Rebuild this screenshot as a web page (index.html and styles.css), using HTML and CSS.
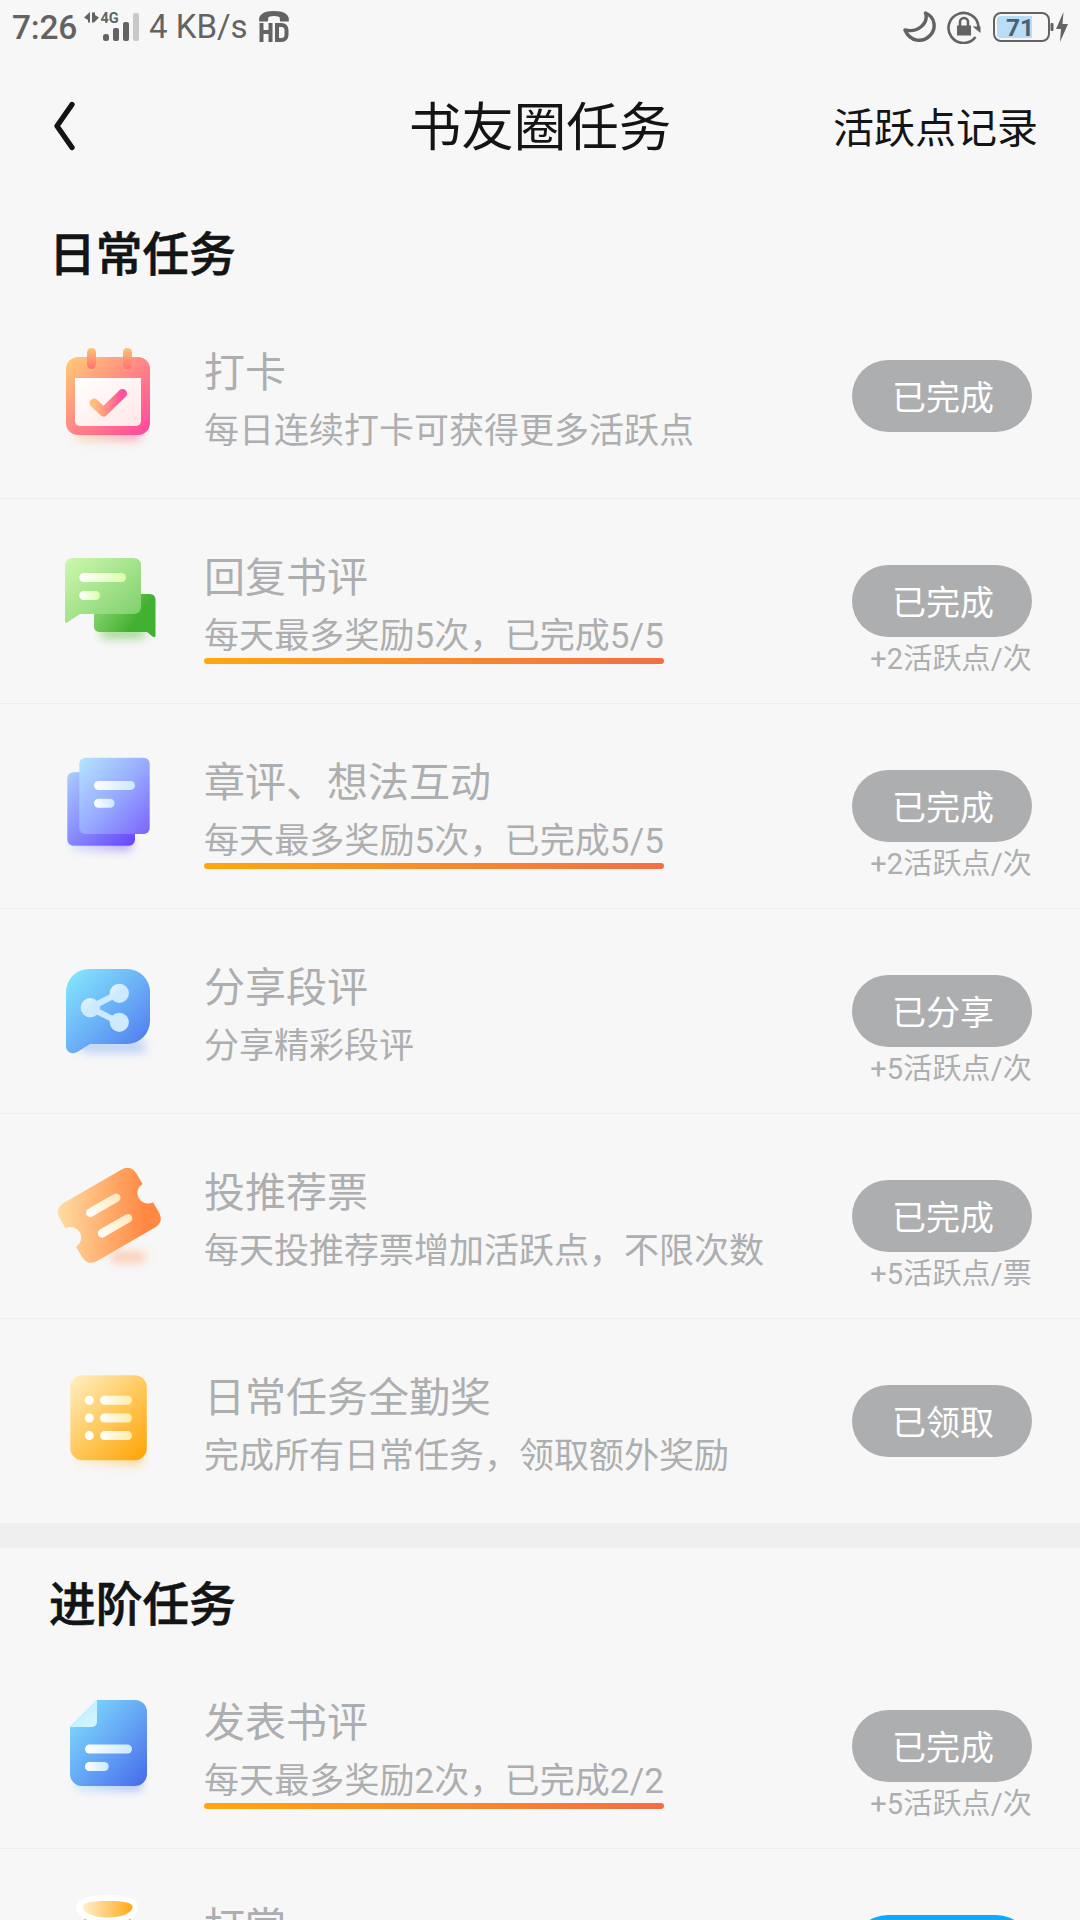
FILE: index.html
```html
<!DOCTYPE html>
<html lang="zh-CN">
<head>
<meta charset="utf-8">
<title>书友圈任务</title>
<link rel="stylesheet" href="styles.css">
</head>
<body>
<div class="screen">
  <div class="status">
    <span class="time">7:26</span>
    <svg class="signal" width="58" height="32" viewBox="0 0 58 32">
      <path d="M6 1v10.500H4V9L0 6.500zM8 1.500h3v2.500l4 2.500-5 5H8z" fill="#636363"/>
      <text x="16.500" y="12.200" class="net">4G</text>
      <rect x="19" y="23" width="6" height="7" rx="2.500" fill="#636363"/>
      <rect x="29" y="17" width="6" height="13" rx="2" fill="#636363"/>
      <rect x="39" y="11" width="6" height="19" rx="2" fill="#636363"/>
      <rect x="49" y="2" width="6" height="28" rx="2" fill="#c9c9c9"/>
    </svg>
    <span class="speed">4 KB/s</span>
    <svg class="hd" width="32" height="32" viewBox="0 0 32 32" fill="none" stroke="#636363">
      <path d="M1.300 10.500C0 5 4 0 16 0s16 5 14.700 10.500h-8.500L21.500 6C18 4.800 14 4.800 10.500 6l-.7 4.500z" fill="#636363" stroke="none"/>
      <path d="M3.500 12v19M12.500 12v19M3.500 21h9M19 14v15h4.500c3 0 5-2 5-5v-5c0-3-2-5-5-5z" stroke-width="4"/>
    </svg>
    <span class="spacer"></span>
    <svg class="moon" width="34" height="34" viewBox="0 0 34 34"><path d="M22.500 3c10 4 11 16 4.500 22.500-7 7.500-20 6.500-25-5.500C14 23 26 14 22.500 3z" fill="none" stroke="#636363" stroke-width="3.400" stroke-linejoin="round"/></svg>
    <svg class="lock" width="34" height="34" viewBox="0 0 34 34">
      <path d="M28.500 27A15 15 0 1 1 31.500 17" fill="none" stroke="#636363" stroke-width="2.600"/>
      <path d="M25.500 16.500h8V23z" fill="#636363"/>
      <rect x="10" y="15.500" width="14" height="10" fill="#636363"/>
      <path d="M13 16v-4a4 4 0 0 1 8 0v4" fill="none" stroke="#636363" stroke-width="2.600"/>
    </svg>
    <svg class="battery" width="76" height="32" viewBox="0 0 76 32">
      <rect x="1" y="2" width="55" height="28" rx="7" fill="none" stroke="#636363" stroke-width="2"/>
      <path d="M8 5h31v22H8a4 4 0 0 1-4-4V9a4 4 0 0 1 4-4z" fill="#b9dcf7"/>
      <text x="27" y="24.700" class="charge">71</text>
      <rect x="57.500" y="12" width="3" height="8" rx="1" fill="#636363"/>
      <path d="M70.500 1L63 18h5l-1 13 8-18h-5.500z" fill="#636363"/>
    </svg>
  </div>

  <header class="header">
    <svg class="back" width="24" height="50" viewBox="0 0 24 50"><path d="M20 3.500L5 25l15 21.500" fill="none" stroke="#121416" stroke-width="5.300" stroke-linecap="round" stroke-linejoin="round"/></svg>
    <h1 class="title">书友圈任务</h1>
    <a class="record">活跃点记录</a>
  </header>

  <section>
    <h2 class="heading">日常任务</h2>

    <div class="row">
      <svg class="icon" viewBox="0 0 120 120">
        <defs>
          <filter id="blur" x="-50%" y="-100%" width="200%" height="300%"><feGaussianBlur stdDeviation="5"/></filter>
          <linearGradient id="c1" x1="0" y1="0" x2="1" y2="1"><stop offset="0" stop-color="#ffcd74"/><stop offset=".5" stop-color="#ff8785"/><stop offset="1" stop-color="#ff459f"/></linearGradient>
          <linearGradient id="c2" x1="0" y1="0" x2="0" y2="1"><stop offset="0" stop-color="#ffc472"/><stop offset="1" stop-color="#ff7176"/></linearGradient>
          <linearGradient id="c3" x1="0" y1="0" x2="1" y2="0"><stop offset="0" stop-color="#ffbf78"/><stop offset="1" stop-color="#ff4f9d"/></linearGradient>
          <linearGradient id="c4" x1="0" y1="0" x2="1" y2="1"><stop offset="0" stop-color="#fff"/><stop offset="1" stop-color="#ffe7e7"/></linearGradient>
          <linearGradient id="c5"><stop offset="0" stop-color="#ffcf7e"/><stop offset="1" stop-color="#ff5a86"/></linearGradient>
        </defs>
        <rect x="27" y="93" width="66" height="14" rx="6" fill="url(#c5)" opacity=".5" filter="url(#blur)"/>
        <rect x="18" y="23" width="84" height="78" rx="12" fill="url(#c1)"/>
        <path d="M27 44h66v43a5 5 0 0 1-5 5H32a5 5 0 0 1-5-5z" fill="url(#c4)"/>
        <rect x="39" y="14" width="9" height="21" rx="4.500" fill="url(#c2)"/>
        <rect x="75" y="14" width="9" height="21" rx="4.500" fill="url(#c2)"/>
        <path d="M46 69l9.500 9L74.500 59.500" fill="none" stroke="url(#c3)" stroke-width="9" stroke-linecap="round" stroke-linejoin="round"/>
      </svg>
      <div class="info"><h3 class="name">打卡</h3><p class="desc">每日连续打卡可获得更多活跃点</p></div>
      <div class="action"><span class="btn">已完成</span></div>
    </div>

    <div class="row">
      <svg class="icon" viewBox="0 0 120 120">
        <defs>
          <linearGradient id="g1" x1="0" y1="0" x2="1" y2="1"><stop offset="0" stop-color="#cff8ae"/><stop offset="1" stop-color="#79cd69"/></linearGradient>
          <linearGradient id="g2" x1="0" y1="0" x2="1" y2=".5"><stop offset="0" stop-color="#97dc7d"/><stop offset=".8" stop-color="#42b030"/></linearGradient>
          <linearGradient id="g3"><stop offset="0" stop-color="#fff"/><stop offset="1" stop-color="#dcffad"/></linearGradient>
        </defs>
        <rect x="52" y="88" width="46" height="12" rx="6" fill="#75c85f" opacity=".6" filter="url(#blur)"/>
        <path d="M52 55h49.500q6 0 6 6v35.500q0 3-3 1L99 93H52q-6 0-6-6V61q0-6 6-6z" fill="url(#g2)"/>
        <path d="M25 19h60q8 0 8 8v40q0 8-8 8H32L19 83.500q-2 1-2-1V27q0-8 8-8z" fill="url(#g1)"/>
        <rect x="31.300" y="34" width="46.700" height="9" rx="4.500" fill="url(#g3)"/>
        <rect x="31.300" y="52" width="20.700" height="9" rx="4.500" fill="url(#g3)"/>
      </svg>
      <div class="info"><h3 class="name">回复书评</h3><p class="desc underlined">每天最多奖励5次，已完成5/5</p></div>
      <div class="action"><span class="btn">已完成</span><span class="hint">+2活跃点/次</span></div>
    </div>

    <div class="row">
      <svg class="icon" viewBox="0 0 120 120">
        <defs>
          <linearGradient id="p1" x1="0" y1="0" x2="1" y2="1"><stop offset="0" stop-color="#b5e5ff"/><stop offset=".5" stop-color="#98acff"/><stop offset="1" stop-color="#7a64fc"/></linearGradient>
          <linearGradient id="p2" x1="0" y1="0" x2="1" y2="1"><stop offset="0" stop-color="#a9cdff"/><stop offset="1" stop-color="#6644fb"/></linearGradient>
          <linearGradient id="p3"><stop offset="0" stop-color="#fff"/><stop offset="1" stop-color="#cde8ff"/></linearGradient>
          <linearGradient id="p4"><stop offset="0" stop-color="#c5dcff"/><stop offset="1" stop-color="#7d5cf8"/></linearGradient>
        </defs>
        <rect x="22" y="94" width="62" height="13" rx="6" fill="url(#p4)" opacity=".55" filter="url(#blur)"/>
        <rect x="19.300" y="28.300" width="67.700" height="73.400" rx="6" fill="url(#p2)"/>
        <rect x="31.300" y="13.700" width="70.400" height="76.300" rx="6" fill="url(#p1)"/>
        <rect x="46" y="37" width="41" height="9" rx="4.500" fill="url(#p3)"/>
        <rect x="46" y="54.800" width="20.500" height="9" rx="4.500" fill="url(#p3)"/>
      </svg>
      <div class="info"><h3 class="name">章评、想法互动</h3><p class="desc underlined">每天最多奖励5次，已完成5/5</p></div>
      <div class="action"><span class="btn">已完成</span><span class="hint">+2活跃点/次</span></div>
    </div>

    <div class="row">
      <svg class="icon" viewBox="0 0 120 120">
        <defs>
          <linearGradient id="b1" x1="0" y1="0" x2="1" y2="1"><stop offset="0" stop-color="#86ebff"/><stop offset=".5" stop-color="#6bb1f7"/><stop offset="1" stop-color="#4c73ed"/></linearGradient>
          <linearGradient id="b2" x1="0" y1="0" x2="1" y2="1"><stop offset="0" stop-color="#e9f6ff"/><stop offset=".5" stop-color="#cde9ff"/></linearGradient>
        </defs>
        <rect x="32" y="91" width="66" height="13" rx="6" fill="#86b0f5" opacity=".5" filter="url(#blur)"/>
        <path d="M41 20h38a23 23 0 0 1 23 23v29a23 23 0 0 1-23 23H42L30 102.500C24 106.500 18 103 18 97V43a23 23 0 0 1 23-23z" fill="url(#b1)"/>
        <path d="M71 44L42 58.700 71 73.300" fill="none" stroke="#cdeaff" stroke-width="6"/>
        <circle cx="71.300" cy="44.300" r="9.600" fill="url(#b2)"/>
        <circle cx="42.300" cy="58.700" r="9.600" fill="url(#b2)"/>
        <circle cx="71.300" cy="73.300" r="9.600" fill="#cdeaff"/>
      </svg>
      <div class="info"><h3 class="name">分享段评</h3><p class="desc">分享精彩段评</p></div>
      <div class="action"><span class="btn">已分享</span><span class="hint">+5活跃点/次</span></div>
    </div>

    <div class="row">
      <svg class="icon" viewBox="0 0 120 120">
        <defs>
          <linearGradient id="o1" x1="0" y1="0" x2="1" y2=".45"><stop offset="0" stop-color="#ffe0a6"/><stop offset="1" stop-color="#ff8843"/></linearGradient>
          <linearGradient id="o2"><stop offset="0" stop-color="#fff"/><stop offset="1" stop-color="#ffe9ba"/></linearGradient>
        </defs>
        <rect x="62" y="97" width="36" height="12" rx="6" fill="#ff9e66" opacity=".45" filter="url(#blur)"/>
        <g transform="translate(61.300 61.300) rotate(-30)">
          <path d="M-32.500-33.500H32.500Q44.500-33.500 44.500-21.500V-10.500A10.500 10.500 0 0 0 44.500 10.500V21.500Q44.500 33.500 32.500 33.500H-32.500Q-44.500 33.500-44.500 21.500V10.500A10.500 10.500 0 0 0-44.500-10.500V-21.500Q-44.500-33.500-32.500-33.500z" fill="url(#o1)"/>
          <rect x="-19.500" y="-16" width="38.500" height="8.500" rx="4.250" fill="url(#o2)"/>
          <rect x="-19.500" y="7.700" width="38.500" height="8.500" rx="4.250" fill="url(#o2)"/>
        </g>
      </svg>
      <div class="info"><h3 class="name">投推荐票</h3><p class="desc">每天投推荐票增加活跃点，不限次数</p></div>
      <div class="action"><span class="btn">已完成</span><span class="hint">+5活跃点/票</span></div>
    </div>

    <div class="row last">
      <svg class="icon" viewBox="0 0 120 120">
        <defs>
          <linearGradient id="y1" x1="0" y1="0" x2=".9" y2="1"><stop offset="0" stop-color="#fff0c5"/><stop offset=".5" stop-color="#ffcb63"/><stop offset="1" stop-color="#ffa60b"/></linearGradient>
          <linearGradient id="y2"><stop offset="0" stop-color="#fff"/><stop offset="1" stop-color="#ffeca9"/></linearGradient>
          <linearGradient id="y3"><stop offset="0" stop-color="#fff0d0"/><stop offset="1" stop-color="#ffa918"/></linearGradient>
        </defs>
        <rect x="27" y="94" width="68" height="12" rx="6" fill="url(#y3)" opacity=".5" filter="url(#blur)"/>
        <rect x="22.300" y="16.300" width="76.500" height="85" rx="12" fill="url(#y1)"/>
        <g fill="#fff"><circle cx="41.300" cy="41.300" r="4.500"/><circle cx="41.300" cy="59" r="4.500"/><circle cx="41.300" cy="76.600" r="4.500"/></g>
        <g fill="url(#y2)"><rect x="52" y="36.800" width="32" height="9" rx="4.500"/><rect x="52" y="54.500" width="32" height="9" rx="4.500"/><rect x="52" y="72.100" width="32" height="9" rx="4.500"/></g>
      </svg>
      <div class="info"><h3 class="name">日常任务全勤奖</h3><p class="desc">完成所有日常任务，领取额外奖励</p></div>
      <div class="action"><span class="btn">已领取</span></div>
    </div>
  </section>

  <div class="gap"></div>

  <section>
    <h2 class="heading">进阶任务</h2>

    <div class="row">
      <svg class="icon" viewBox="0 0 120 120">
        <defs>
          <linearGradient id="d1" x1="0" y1="0" x2="1" y2="1"><stop offset=".1" stop-color="#7ed8ff"/><stop offset=".5" stop-color="#66a9f5"/><stop offset="1" stop-color="#4769ea"/></linearGradient>
          <linearGradient id="d2"><stop offset="0" stop-color="#a9e9ff"/><stop offset="1" stop-color="#708cf2"/></linearGradient>
          <linearGradient id="d3" x1="0" y1="0" x2="1" y2="1"><stop offset="0" stop-color="#b3ecff"/><stop offset="1" stop-color="#d7f5ff"/></linearGradient>
        </defs>
        <rect x="26" y="95" width="68" height="12" rx="6" fill="url(#d2)" opacity=".55" filter="url(#blur)"/>
        <path d="M49 16h38a12 12 0 0 1 12 12v62a12 12 0 0 1-12 12H34a12 12 0 0 1-12-12V43z" fill="url(#d1)"/>
        <path d="M49 16v22a5 5 0 0 1-5 5H22z" fill="url(#d3)"/>
        <rect x="37" y="60.500" width="47" height="9" rx="4.500" fill="url(#p3)"/>
        <rect x="37" y="78" width="23.700" height="9" rx="4.500" fill="url(#p3)"/>
      </svg>
      <div class="info"><h3 class="name">发表书评</h3><p class="desc underlined">每天最多奖励2次，已完成2/2</p></div>
      <div class="action"><span class="btn">已完成</span><span class="hint">+5活跃点/次</span></div>
    </div>

    <div class="row">
      <svg class="icon" viewBox="0 0 120 120">
        <path d="M28.500 17C28.500 9 42 6 59.500 6S90 9 90 17c0 7-3 10-8 15v10H37V32c-5-5-8.500-8-8.500-15z" fill="#fff"/>
        <path d="M34.500 17.500c0-4 10-5.500 25-5.500s25 1.500 25 5.500C84.500 24 74 28.500 59.500 28.500s-25-5-25-11z" fill="url(#y3)"/>
        <path d="M36 29.500q23.500 12 47 0v10H36z" fill="#ffb42f"/>
      </svg>
      <div class="info"><h3 class="name">打赏</h3></div>
      <div class="action"><span class="btn primary"></span></div>
    </div>
  </section>
</div>
</body>
</html>
```
FILE: styles.css
```css
* { box-sizing: border-box; }
body, h1, h2, h3, p { margin: 0; }
body {
  background: #f7f7f7;
  font-family: Roboto, "Noto Sans CJK SC", sans-serif;
  color: #121416;
}
.screen { width: 1080px; height: 1920px; overflow: hidden; }

.status {
  display: flex;
  align-items: center;
  height: 54px;
  padding: 0 11px 0 12px;
  color: #636363;
}
.status svg { flex: none; }
.time { width: 66px; font-size: 33.500px; font-weight: 500; line-height: 54px; margin-top: 2px; letter-spacing: -.2px; }
.signal { margin-left: 6px; }
.net { font: 700 14.500px Roboto, sans-serif; fill: #636363; }
.speed { width: 101px; font-size: 33px; margin-left: 7px; line-height: 54px; white-space: nowrap; }
.hd { margin-left: 8px; }
.spacer { flex: 1; }
.moon { margin-right: 10px; }
.lock { margin-right: 12px; }
.charge { font: 700 24.500px Roboto, sans-serif; fill: #4a6273; text-anchor: middle; }

.header {
  display: grid;
  grid-template-columns: 1fr auto 1fr;
  align-items: center;
  height: 144px;
  padding: 0 42px;
}
.back { margin-left: 10px; }
.title { font-size: 52.500px; font-weight: 400; line-height: 60px; padding-top: 3px; }
.record { justify-self: end; font-size: 41px; line-height: 60px; padding-top: 6px; }

.heading {
  height: 96px;
  padding: 15px 0 0 49px;
  font-size: 46.700px;
  font-weight: 500;
  line-height: 84px;
  -webkit-text-stroke: .6px currentColor;
}

.row {
  display: flex;
  height: 205px;
  padding: 0 48px;
  border-bottom: 1px solid #eeeeee;
}
.row.last { height: 204px; border-bottom: 0; }
.icon { flex: none; width: 120px; height: 120px; margin-top: 40px; }
.info {
  flex: 1;
  display: flex;
  flex-direction: column;
  align-items: flex-start;
  padding: 51px 0 0 36px;
  color: #adaeb0;
}
.name { font-size: 41px; font-weight: 400; line-height: 56px; }
.desc { font-size: 35px; line-height: 62px; }
.underlined { letter-spacing: .1px; }
.underlined::after {
  content: "";
  display: block;
  height: 6px;
  margin-top: -10px;
  border-radius: 3px;
  background: linear-gradient(90deg, #ffa70f, #f26f45);
}
.action {
  display: flex;
  flex-direction: column;
  align-items: flex-end;
  padding-top: 66px;
}
.btn {
  width: 180px;
  height: 72px;
  padding: 2px 0 0 2px;
  border-radius: 36px;
  background: #adaeb0;
  color: #fff;
  font-size: 34px;
  line-height: 72px;
  text-align: center;
}
.btn.primary { background: #12a9fb; }
.hint { font-size: 29px; line-height: 45px; letter-spacing: .15px; color: #adaeb0; }

.gap { height: 25px; background: #efefef; }
```
